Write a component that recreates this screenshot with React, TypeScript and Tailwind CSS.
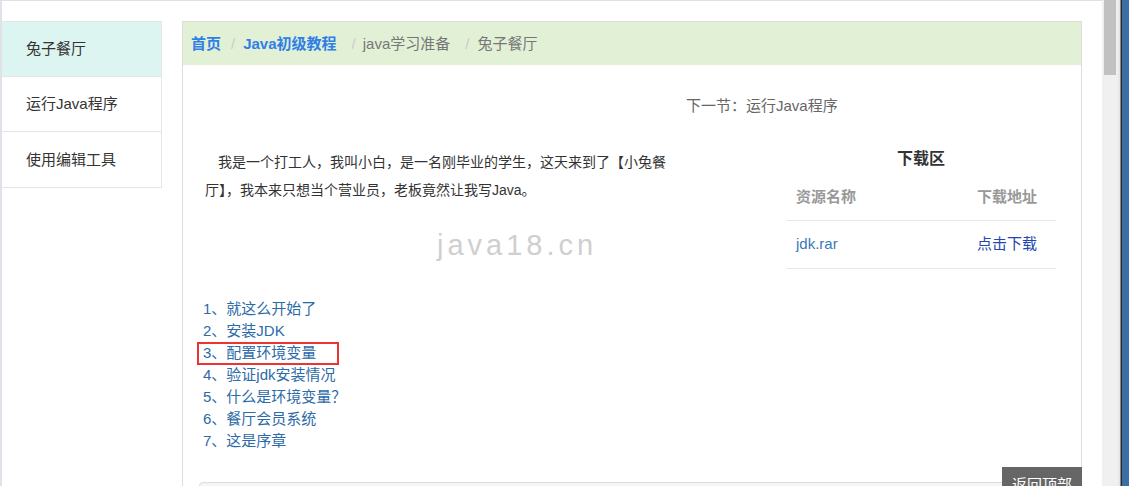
import React from "react";

const FONT = { fontFamily: '"Liberation Sans", "Noto Sans CJK SC", sans-serif' };

export default function App() {
  const items = [
    "1、就这么开始了",
    "2、安装JDK",
    "3、配置环境变量",
    "4、验证jdk安装情况",
    "5、什么是环境变量？",
    "6、餐厅会员系统",
    "7、这是序章",
  ];
  return (
    <div className="relative w-[1129px] h-[486px] overflow-hidden bg-white flex" style={FONT}>
      {/* left strip */}
      <div className="w-[2px] h-full bg-[#dfe3e9] shrink-0" />
      {/* main area */}
      <div className="w-[1100px] h-full shrink-0 border-t border-[#dde1e7] flex items-start pt-[20px]">
        {/* sidebar */}
        <div className="w-[160px] shrink-0 border-t border-r border-b border-[#e6e6e6] text-[15px] text-[#333]">
          <div className="h-[55px] flex items-center pl-[24px] pt-[1px] bg-[#ddf5f1] border-b border-[#e6e6e6]">兔子餐厅</div>
          <div className="h-[55px] flex items-center pl-[24px] pt-[1px] border-b border-[#e6e6e6]">运行Java程序</div>
          <div className="h-[55px] flex items-center pl-[24px] pt-[1px]">使用编辑工具</div>
        </div>
        {/* panel */}
        <div className="ml-[20px] w-[900px] shrink-0 h-[480px] border border-[#dddddd] flex flex-col">
          <div className="h-[43px] bg-[#e2f0d5] flex items-center pl-[8px] text-[15px] leading-[20px]">
            <span className="font-bold text-[#2f7fe8]">首页</span>
            <span className="ml-[10px] mr-[8px] text-[#cccccc]">/</span>
            <span className="font-bold text-[#2f7fe8]">Java初级教程</span>
            <span className="ml-[15px] mr-[7px] text-[#cccccc]">/</span>
            <span className="text-[#777]">java学习准备</span>
            <span className="ml-[15px] mr-[8px] text-[#cccccc]">/</span>
            <span className="text-[#777]">兔子餐厅</span>
          </div>
          <div className="mt-[30px] pl-[503px] text-[15px] leading-[22px] text-[#666]">下一节：运行Java程序</div>
          <div className="mt-[31px] flex items-start">
            <div className="ml-[22px] w-[470px] shrink-0">
              <p className="text-[14px] leading-[28px] text-[#333] indent-[13px]">
                我是一个打工人，我叫小白，是一名刚毕业的学生，这天来到了【小兔餐厅】，我本来只想当个营业员，老板竟然让我写Java。
              </p>
              <div className="mt-[23px] pl-[232px] h-[36px] text-[29px] leading-[36px] tracking-[4px] text-[#cfcfcf]" style={{ fontFamily: '"Liberation Sans", sans-serif' }}>
                java18.cn
              </div>
            </div>
            <div className="ml-[111px] w-[270px] shrink-0">
              <div className="h-[22px] text-center text-[16px] leading-[22px] font-bold text-[#333]">下载区</div>
              <div className="h-[51px] pt-[5px] flex items-center justify-between pl-[10px] pr-[19px] border-b border-[#e8e8e8] text-[15px] font-bold text-[#999]">
                <span>资源名称</span>
                <span>下载地址</span>
              </div>
              <div className="h-[48px] flex items-center justify-between pl-[10px] pr-[19px] border-b border-[#e8e8e8] text-[15px]">
                <span className="text-[#3a7ab8]">jdk.rar</span>
                <span className="text-[#2446b0]">点击下载</span>
              </div>
            </div>
          </div>
          <ul className="mt-[29px] pl-[20px] text-[15px] leading-[22px] text-[#2d6aa8]">
            {items.map((t, i) => (
              <li key={i} className="relative h-[22px]">
                {t}
                {i === 2 && (
                  <span className="absolute left-[-6px] top-0 w-[142px] h-[23px] border-2 border-[#ee3333]" />
                )}
              </li>
            ))}
          </ul>
          <div className="mt-[30px] mx-[16px] flex-1 border border-[#dddddd] rounded-t-[4px] bg-[#f5f5f5]" />
        </div>
      </div>
      {/* scrollbar */}
      <div className="w-[16px] h-full bg-[#f0f0f0] shrink-0 pl-[2px]">
        <div className="w-[12px] h-[75px] bg-[#c1c1c1]" />
      </div>
      <div className="w-[2px] h-full bg-[#e6e6ec] shrink-0" />
      <div className="w-[1px] h-full bg-[#8a8a8a] shrink-0" />
      <div className="w-[1px] h-full bg-[#2a2a2a] shrink-0" />
      <div className="flex-1 h-full bg-[#3a6ea5]" />
      {/* back to top */}
      <div className="absolute left-[1002px] top-[467px] w-[80px] h-[40px] bg-[#666666] text-white text-[15px] leading-[20px] pt-[8px] text-center">
        返回顶部
      </div>
    </div>
  );
}
